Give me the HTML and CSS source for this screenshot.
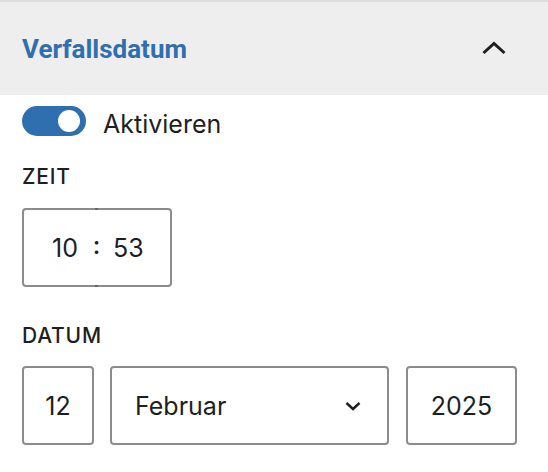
FILE: index.html
```html
<!DOCTYPE html>
<html lang="de">
<head>
<meta charset="utf-8">
<title>Verfallsdatum</title>
<link rel="stylesheet" href="styles.css">
</head>
<body>
<div class="panel">
  <div class="panel-header">
    <h2 class="panel-title">Verfallsdatum</h2>
    <svg class="panel-chevron" width="24" height="14" viewBox="0 0 24 14" aria-hidden="true">
      <path d="M1.5 12 L12 2.5 L22.5 12" fill="none" stroke="#1e1e1e" stroke-width="3"/>
    </svg>
  </div>
  <div class="panel-body">
    <div class="toggle-row">
      <span class="toggle"><span class="toggle-knob"></span></span>
      <span class="toggle-label">Aktivieren</span>
    </div>
    <div class="field-label label-time">Zeit</div>
    <div class="time-box">
      <span class="time-hours">10</span>
      <span class="time-sep"><span class="time-colon">:</span></span>
      <span class="time-minutes">53</span>
    </div>
    <div class="field-label label-date">Datum</div>
    <div class="date-row">
      <div class="box box-day">12</div>
      <div class="box box-month">
        <span>Februar</span>
        <svg class="select-chevron" width="16" height="10" viewBox="0 0 16 10" aria-hidden="true">
          <path d="M1.5 2 L8 8 L14.5 2" fill="none" stroke="#1e1e1e" stroke-width="2.4"/>
        </svg>
      </div>
      <div class="box box-year">2025</div>
    </div>
  </div>
</div>
</body>
</html>
```

FILE: styles.css
```css
html, body {
  margin: 0;
  padding: 0;
  background: #ffffff;
}

body {
  font-family: Inter, "Noto Sans", sans-serif;
  color: #1e1e1e;
}

.panel {
  border-top: 2px solid #dddddd;
}

.panel-header {
  height: 93px;
  background: #eeeeee;
  display: flex;
  align-items: center;
  justify-content: space-between;
  padding: 0 42px 0 22px;
}

.panel-title {
  margin: 0;
  font-family: Roboto, "Liberation Sans", sans-serif;
  font-weight: 700;
  font-size: 26px;
  line-height: 30px;
  color: #2f6fb0;
}

.panel-chevron {
  display: block;
  margin-top: -2px;
}

.panel-body {
  padding: 11px 22px 0 22px;
}

.toggle-row {
  display: flex;
  align-items: center;
  gap: 17px;
  height: 30px;
}

.toggle {
  width: 64px;
  height: 30px;
  box-sizing: border-box;
  border-radius: 15px;
  background: #2f6fb0;
  display: flex;
  align-items: center;
  justify-content: flex-end;
  padding: 0 6px;
}

.toggle-knob {
  width: 22px;
  height: 22px;
  border-radius: 50%;
  background: #ffffff;
}

.toggle-label {
  font-size: 25px;
  line-height: 30px;
  padding-top: 5px;
}

.field-label {
  font-size: 21px;
  font-weight: 500;
  line-height: 24px;
  text-transform: uppercase;
  letter-spacing: 0.8px;
}

.label-time {
  margin-top: 29px;
}

.time-box {
  margin-top: 19px;
  width: 150px;
  height: 79px;
  box-sizing: border-box;
  border: 2px solid #8c8c8c;
  border-radius: 4px;
  display: flex;
  align-items: center;
  font-size: 25px;
  padding-left: 28px;
}

.time-sep {
  align-self: stretch;
  margin: -2px 0;
  width: 3px;
  border-top: 2px solid #666666;
  border-bottom: 2px solid #666666;
  display: flex;
  align-items: center;
  justify-content: center;
  margin-left: 17px;
  margin-right: 15px;
}

.time-colon {
  font-size: 25px;
  font-weight: 500;
  transform: translateY(-3px);
}

.label-date {
  margin-top: 37px;
}

.date-row {
  margin-top: 18px;
  display: flex;
  gap: 16px;
}

.box {
  height: 79px;
  box-sizing: border-box;
  border: 2px solid #8c8c8c;
  border-radius: 4px;
  display: flex;
  align-items: center;
  justify-content: center;
  font-size: 25px;
}

.box-day {
  width: 72px;
}

.box-month {
  width: 279px;
  justify-content: space-between;
  padding: 0 26px 0 23px;
}

.select-chevron {
  display: block;
}

.box-year {
  width: 111px;
  margin-left: 1px;
}
```
